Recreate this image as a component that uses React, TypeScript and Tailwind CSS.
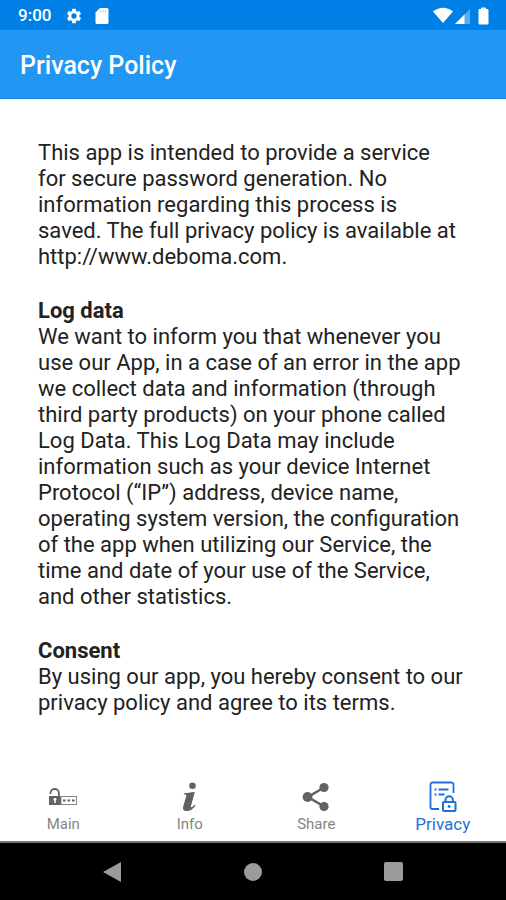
import React, { useState } from "react";
import { MdSettings } from "react-icons/md";

const MainIcon = () => (
  <svg width="30" height="18" viewBox="0 0 30 18" fill="none">
    <path d="M2.500 6V5a4.200 4 0 0 1 8.400 0v3" stroke="#626262" strokeWidth="1.800" />
    <rect x="1" y="8" width="12" height="9" fill="#626262" />
    <circle cx="7" cy="11.300" r="1.400" fill="#fff" />
    <path d="M7 11.500V15" stroke="#fff" strokeWidth="1.500" />
    <rect x="13" y="8.500" width="15.500" height="8" stroke="#858585" />
    <path d="M15 12.500h2.600M19.500 12.500h2.600M24 12.500h2.600" stroke="#626262" strokeWidth="2" />
  </svg>
);

const InfoIcon = () => (
  <svg width="16" height="30" viewBox="0 0 16 30" fill="#626262">
    <circle cx="10.500" cy="3.700" r="3.300" />
    <path d="M2 11.400c3-.5 6-.9 10.800-1.400L9 24c-.4 1.400.5 1.600 1.500.8l2-2 1 .9C10.800 27 8.200 29 5 29c-3.300 0-4.600-1.700-3.800-4.600L4.200 14c.3-1.200-.4-1.500-2.500-1.500z" />
  </svg>
);

const ShareIcon = () => (
  <svg width="30" height="30" viewBox="0 0 30 30" fill="#626262">
    <path d="M23 5.500L7 15l16 9.500" fill="none" stroke="#626262" strokeWidth="2.600" />
    <circle cx="23" cy="5.500" r="4.600" />
    <circle cx="6.500" cy="15" r="4.900" />
    <circle cx="23" cy="24.500" r="4.600" />
  </svg>
);

const PrivacyIcon = () => (
  <svg width="28" height="32" viewBox="0 0 28 32" fill="none" stroke="#1f6fdc">
    <path
      d="M24.500 12V3.500a2 2 0 0 0-2-2h-19a2 2 0 0 0-2 2V26a2 2 0 0 0 2 2H10"
      strokeWidth="1.800"
    />
    <path d="M5.500 8.500h2M9.500 8.500h10M5.500 13.500h2M9.500 13.500h6" strokeWidth="1.800" />
    <path d="M16.500 21v-2a3.700 3.700 0 0 1 7.400 0v2" strokeWidth="2" />
    <rect x="14" y="21" width="12.500" height="9" rx="1" strokeWidth="2" />
    <circle cx="20.200" cy="25.500" r="1.400" fill="#1f6fdc" stroke="none" />
  </svg>
);

const tabs = [
  { name: "Main", icon: <MainIcon /> },
  { name: "Info", icon: <InfoIcon /> },
  { name: "Share", icon: <ShareIcon /> },
  { name: "Privacy", icon: <PrivacyIcon /> },
];

const StatusBar = () => (
  <div className="flex h-[30px] items-center justify-between bg-[#007fe6] pt-px pr-4 pl-[18px] text-white">
    <div className="flex items-center">
      <span className="text-[17px] font-medium">9:00</span>
      <MdSettings size={18} className="ml-[14px]" />
      <svg width="14" height="16" viewBox="0 0 14 16" fill="#fff" className="ml-3">
        <path d="M5 0h7a1.500 1.500 0 0 1 1.500 1.500v13A1.500 1.500 0 0 1 12 16H2a1.500 1.500 0 0 1-1.500-1.500v-10z" />
        <path d="M5.500 2v2.500M8 2v2.500M10.500 2v2.500" stroke="#8cc6f5" strokeWidth=".8" />
      </svg>
    </div>
    <svg width="58" height="18" viewBox="0 0 58 18" fill="#fff">
      <path d="M1 4.500Q11 -3 21 4.500L11 16z" />
      <path d="M23 17L38 2v15z" fillOpacity=".35" />
      <path d="M23 17L32.500 7.500V17z" />
      <path d="M47 2.500h2.500V1h4v1.500H56V17h-9z" strokeLinejoin="round" stroke="#fff" />
    </svg>
  </div>
);

const App = () => {
  const [active, setActive] = useState<string>("Privacy");

  return (
    <div className="flex min-h-screen flex-col bg-white font-['Roboto',sans-serif]">
      <StatusBar />
      <header className="flex h-[69px] items-center border-b border-[#1282df] bg-[#2196f3] px-5 pt-1">
        <h1 className="text-[25px] font-medium text-white">Privacy Policy</h1>
      </header>

      <main className="flex grow flex-col gap-7 pt-[41px] pr-10 pl-[38px] text-[22px] leading-[26px] text-[#222]">
        <p>
          This app is intended to provide a service
          <br />
          for secure password generation. No
          <br />
          information regarding this process is
          <br />
          saved. The full privacy policy is available at
          <br />
          http://www.deboma.com.
        </p>
        <section>
          <h2 className="font-bold">Log data</h2>
          <p>
            We want to inform you that whenever you use our App, in a case of an
            error in the app we collect data and information (through third
            party products) on your phone called Log Data. This Log Data may
            include information such as your device Internet Protocol (“IP”)
            address, device name, operating system version, the configuration of
            the app when utilizing our Service, the time and date of your use of
            the Service, and other statistics.
          </p>
        </section>
        <section>
          <h2 className="font-bold">Consent</h2>
          <p>
            By using our app, you hereby consent to our privacy policy and agree
            to its terms.
          </p>
        </section>
      </main>

      <nav className="grid h-[72px] grid-cols-4 border-b-2 border-[#777]">
        {tabs.map((tab) => (
          <button
            key={tab.name}
            onClick={() => setActive(tab.name)}
            className="flex flex-col items-center pt-2"
          >
            <span className="flex h-[35px] items-center">{tab.icon}</span>
            <span
              className={
                tab.name === active
                  ? "text-[17px] leading-5 text-[#1f6fdc]"
                  : "text-[15px] leading-5 text-[#858585]"
              }
            >
              {tab.name}
            </span>
          </button>
        ))}
      </nav>

      <footer className="flex h-[57px] items-center justify-around bg-black px-[42px]">
        <button aria-label="Back">
          <svg width="20" height="22" viewBox="0 0 20 22" fill="#9b9b9b">
            <path d="M0 11L18 1v20z" />
          </svg>
        </button>
        <button aria-label="Home" className="size-[18px] rounded-full bg-[#9b9b9b]" />
        <button aria-label="Recent apps" className="size-[19px] rounded-xs bg-[#9b9b9b]" />
      </footer>
    </div>
  );
};

export default App;
